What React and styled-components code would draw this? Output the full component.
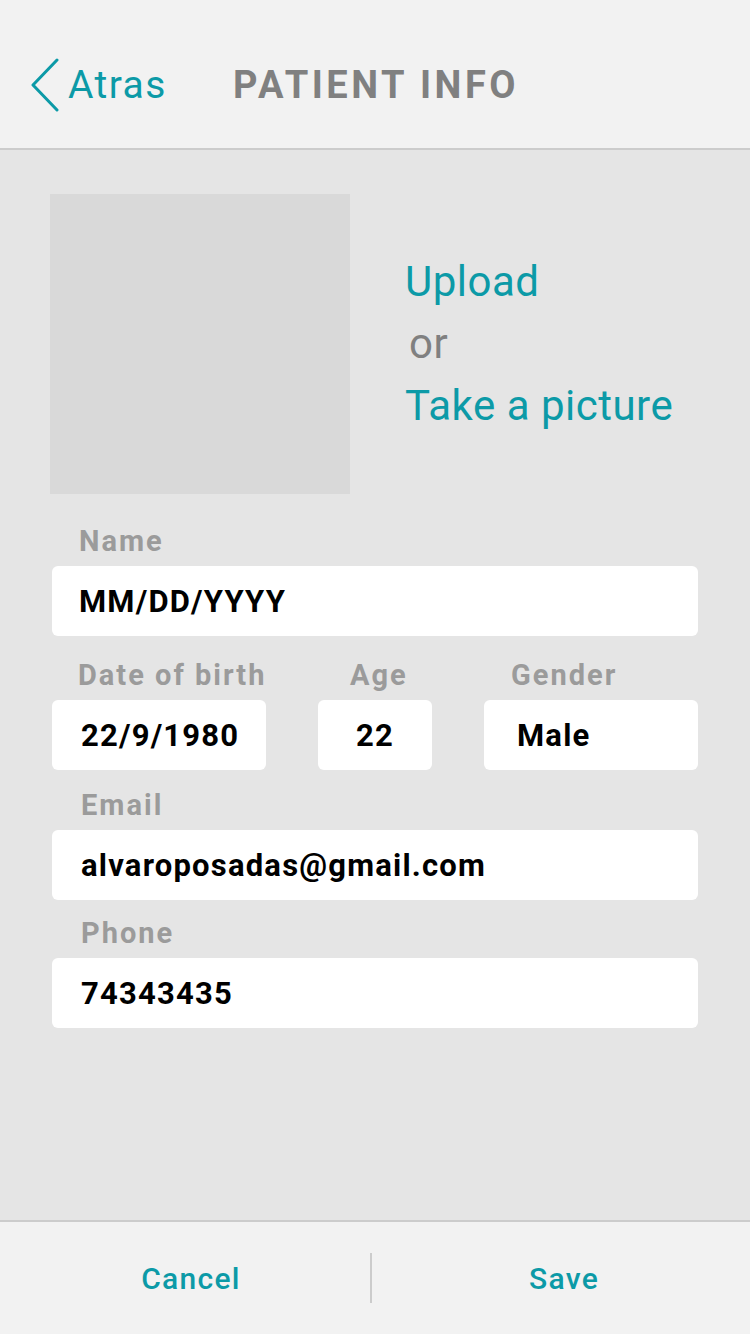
import styled, { createGlobalStyle } from 'styled-components'

const teal = "#0c9aa7"

const GlobalStyle = createGlobalStyle`
    html, body {
        margin: 0;
        padding: 0;
        font-family: Roboto, "Liberation Sans", sans-serif;
    }
    * { box-sizing: border-box; }
`

const Screen = styled.div`
    display: flex;
    flex-direction: column;
    min-height: 1334px;
    background-color: #e5e5e5;
`

const Header = styled.header`
    display: flex;
    align-items: center;
    height: 150px;
    background-color: #f2f2f2;
    border-bottom: 2px solid #cccccc;
    padding: 22px 0 0 31px;
`

const BackLink = styled.a`
    display: flex;
    align-items: center;
    gap: 9px;
    color: ${teal};
    font-size: 39px;
    letter-spacing: 1.4px;
    text-decoration: none;
    width: 202px;
`

const Title = styled.h1`
    margin: 0;
    font-size: 38px;
    font-weight: bold;
    color: #808080;
    letter-spacing: 3.5px;
`

const Content = styled.main`
    flex: 1;
    padding: 44px 52px 0 50px;
`

const PhotoRow = styled.section`
    display: flex;
    align-items: center;
    gap: 55px;
`

const Photo = styled.div`
    width: 300px;
    height: 300px;
    background-color: #d9d9d9;
`

const PhotoActions = styled.div`
    display: flex;
    flex-direction: column;
    font-size: 42px;
    line-height: 62px;
    letter-spacing: 0.5px;
`

const PhotoAction = styled.span`
    color: ${props => props.$muted ? "#808080" : teal};
    padding-left: ${props => props.$muted ? "4px" : "0"};
`

const Form = styled.form`
    display: flex;
    flex-direction: column;
    gap: 16px;
    margin-top: 30px;
    padding-left: 2px;
`

const FieldRow = styled.div`
    display: grid;
    grid-template-columns: 214px 114px 214px;
    column-gap: 52px;
    margin-top: ${props => props.$space || "0"};
`

const Field = styled.div`
    display: flex;
    flex-direction: column;
    margin-top: ${props => props.$space || "0"};
`

const Label = styled.label`
    height: 34px;
    line-height: 34px;
    margin-bottom: 8px;
    padding-left: ${props => props.$indent || "27px"};
    font-size: 29px;
    font-weight: bold;
    color: #9b9b9b;
    letter-spacing: 2px;
    white-space: nowrap;
`

const Input = styled.div`
    display: flex;
    align-items: center;
    justify-content: ${props => props.$center ? "center" : "flex-start"};
    height: 70px;
    padding-left: ${props => props.$center ? "0" : (props.$indent || "28px")};
    background-color: #ffffff;
    border-radius: 6px;
    font-size: 31px;
    font-weight: bold;
    color: #000000;
    letter-spacing: 1.2px;
`

const Footer = styled.footer`
    display: grid;
    grid-template-columns: 370px 2px 1fr;
    align-items: center;
    height: 114px;
    background-color: #f2f2f2;
    border-top: 2px solid #cccccc;
`

const FooterButton = styled.button`
    border: none;
    background: none;
    font-family: inherit;
    font-size: 30px;
    font-weight: 500;
    color: ${teal};
    letter-spacing: 1.3px;
    padding: 0 0 0 ${props => props.$shift || "0"};
`

const FooterDivider = styled.div`
    width: 2px;
    height: 50px;
    background-color: #cccccc;
`

function BackChevron(){
    return(
        <svg width="28" height="54" viewBox="0 0 28 54">
            <polyline points="26,2 2,27 26,52" fill="none" stroke={teal} strokeWidth="3" strokeLinecap="round" strokeLinejoin="round" />
        </svg>
    )
}

function App(){
    return(
        <Screen>
            <GlobalStyle />
            <Header>
                <BackLink href="#"><BackChevron />Atras</BackLink>
                <Title>PATIENT INFO</Title>
            </Header>
            <Content>
                <PhotoRow>
                    <Photo />
                    <PhotoActions>
                        <PhotoAction>Upload</PhotoAction>
                        <PhotoAction $muted>or</PhotoAction>
                        <PhotoAction>Take a picture</PhotoAction>
                    </PhotoActions>
                </PhotoRow>
                <Form onSubmit={(e) => { e.preventDefault() }}>
                    <Field>
                        <Label>Name</Label>
                        <Input $indent="27px">MM/DD/YYYY</Input>
                    </Field>
                    <FieldRow $space="6px">
                        <Field>
                            <Label $indent="26px">Date of birth</Label>
                            <Input $indent="29px">22/9/1980</Input>
                        </Field>
                        <Field>
                            <Label $indent="32px">Age</Label>
                            <Input $center>22</Input>
                        </Field>
                        <Field>
                            <Label $indent="27px">Gender</Label>
                            <Input $indent="33px">Male</Input>
                        </Field>
                    </FieldRow>
                    <Field $space="2px">
                        <Label $indent="29px">Email</Label>
                        <Input $indent="29px">alvaroposadas@gmail.com</Input>
                    </Field>
                    <Field>
                        <Label $indent="29px">Phone</Label>
                        <Input $indent="29px">74343435</Input>
                    </Field>
                </Form>
            </Content>
            <Footer>
                <FooterButton $shift="12px">Cancel</FooterButton>
                <FooterDivider />
                <FooterButton $shift="6px">Save</FooterButton>
            </Footer>
        </Screen>
    )
}

export default App
